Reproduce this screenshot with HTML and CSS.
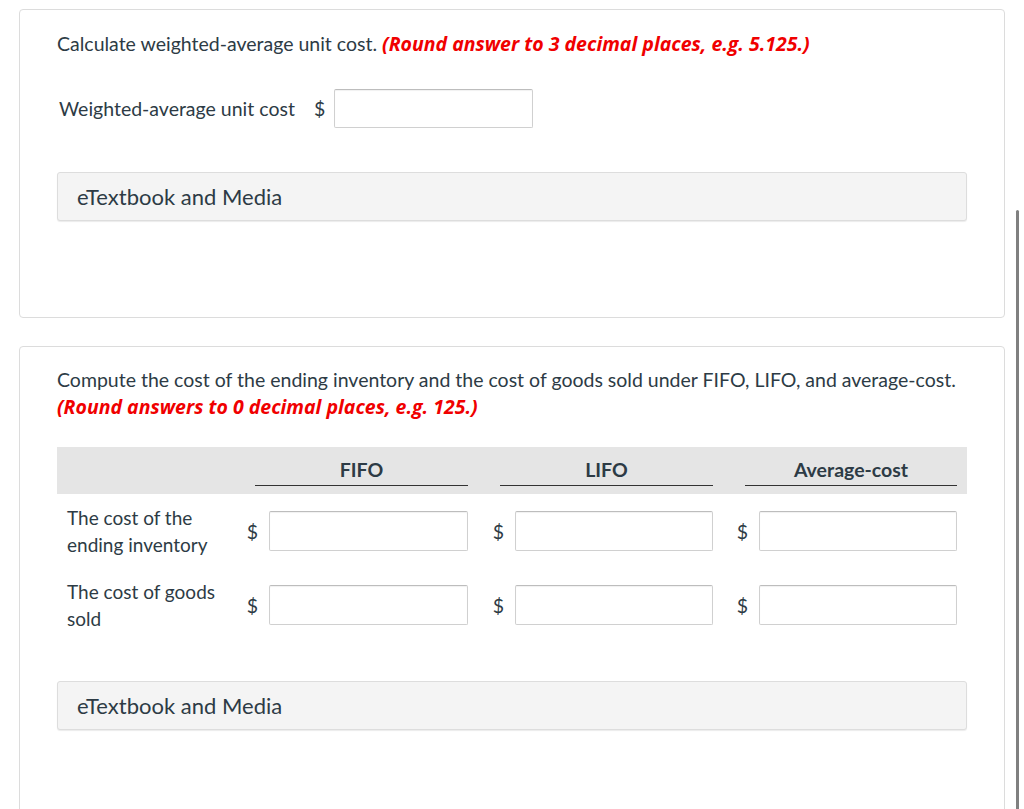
FILE: index.html
```html
<!DOCTYPE html>
<html lang="en">
<head>
<meta charset="utf-8">
<title>Inventory costing</title>
<link rel="stylesheet" href="styles.css">
</head>
<body>
<div class="page">
  <section class="card card-first">
    <p class="question">Calculate weighted-average unit cost. <em class="hint">(Round answer to 3 decimal places, e.g. 5.125.)</em></p>
    <div class="single-row">
      <span class="single-label">Weighted-average unit cost</span>
      <span class="dollar">$</span>
      <input class="field field-single" type="text" aria-label="Weighted-average unit cost">
    </div>
    <div class="media">eTextbook and Media</div>
  </section>

  <section class="card card-second">
    <p class="question">Compute the cost of the ending inventory and the cost of goods sold under FIFO, LIFO, and average-cost.<br><em class="hint">(Round answers to 0 decimal places, e.g. 125.)</em></p>
    <div class="table">
      <div class="thead">
        <div></div>
        <div class="th">FIFO</div>
        <div></div>
        <div class="th">LIFO</div>
        <div></div>
        <div class="th">Average-cost</div>
        <div></div>
      </div>
      <div class="trow">
        <div class="rlabel">The cost of the ending inventory</div>
        <span class="cell-dollar">$</span><input class="field" type="text">
        <span class="cell-dollar">$</span><input class="field" type="text">
        <span class="cell-dollar">$</span><input class="field" type="text">
      </div>
      <div class="trow">
        <div class="rlabel">The cost of goods sold</div>
        <span class="cell-dollar">$</span><input class="field" type="text">
        <span class="cell-dollar">$</span><input class="field" type="text">
        <span class="cell-dollar">$</span><input class="field" type="text">
      </div>
    </div>
    <div class="media">eTextbook and Media</div>
  </section>
</div>
<div class="scrollthumb"></div>
</body>
</html>
```

FILE: styles.css
```css
html, body {
  margin: 0;
  padding: 0;
  background: #fff;
  overflow: hidden;
}
body {
  font-family: Lato, "Liberation Sans", sans-serif;
  color: #2d3b45;
  font-size: 19.5px;
  line-height: 27px;
}
.page {
  padding: 9px 19px 0 19px;
  display: flex;
  flex-direction: column;
  gap: 28px;
}
.card {
  border: 1px solid #dcdcdc;
  border-radius: 4px;
  padding: 20px 37px 96px 37px;
  background: #fff;
}
.card-second {
  padding-top: 19px;
  padding-bottom: 200px;
}
.question {
  margin: 0;
}
.hint {
  color: #f00000;
  font-family: "Open Sans", Lato, sans-serif;
  font-weight: 700;
  font-style: italic;
  font-size: 19.5px;
}
.single-row {
  display: flex;
  align-items: center;
  margin-top: 32px;
  padding-left: 2px;
}
.single-label {
  margin-right: 19px;
}
.dollar {
  margin-right: 9px;
}
.field {
  box-sizing: border-box;
  height: 39px;
  border: 1px solid #d0d0d0;
  border-top-color: #bdbdbd;
  border-radius: 2px;
  box-shadow: inset 0 1px 1px rgba(0,0,0,0.06);
  background: #fff;
  font: inherit;
  padding: 0 8px;
  margin: 0;
}
.field-single {
  width: 199px;
}
.media {
  margin-top: 44px;
  height: 49px;
  box-sizing: border-box;
  border: 1px solid #dddddd;
  border-radius: 3px;
  background: #f4f4f4;
  box-shadow: 0 1px 1px rgba(0,0,0,0.08);
  font-size: 22px;
  line-height: 47px;
  padding-left: 19px;
}
.card-second .media {
  margin-top: 39px;
}
.table {
  margin-top: 27px;
}
.thead {
  display: grid;
  grid-template-columns: 198px 213px 32px 213px 32px 212px 10px;
  background: #e5e5e5;
  height: 47px;
  box-sizing: border-box;
  padding-top: 10px;
}
.th {
  text-align: center;
  font-weight: 700;
  font-size: 19.5px;
  line-height: 26px;
  height: 28px;
  border-bottom: 1.5px solid #333;
}
.trow {
  display: grid;
  grid-template-columns: 186px 26px 199px 47px 198px 46px 198px 10px;
  align-items: center;
  padding: 10px 0;
}
.rlabel {
  padding: 0 10px;
  font-size: 19px;
}
.cell-dollar {
  text-align: right;
  padding-right: 11px;
}
.trow .field {
  width: 100%;
  height: 40px;
}
.scrollthumb {
  position: absolute;
  left: 1016px;
  top: 210px;
  width: 3px;
  height: 620px;
  background: #808080;
  border-radius: 2px;
}
```
